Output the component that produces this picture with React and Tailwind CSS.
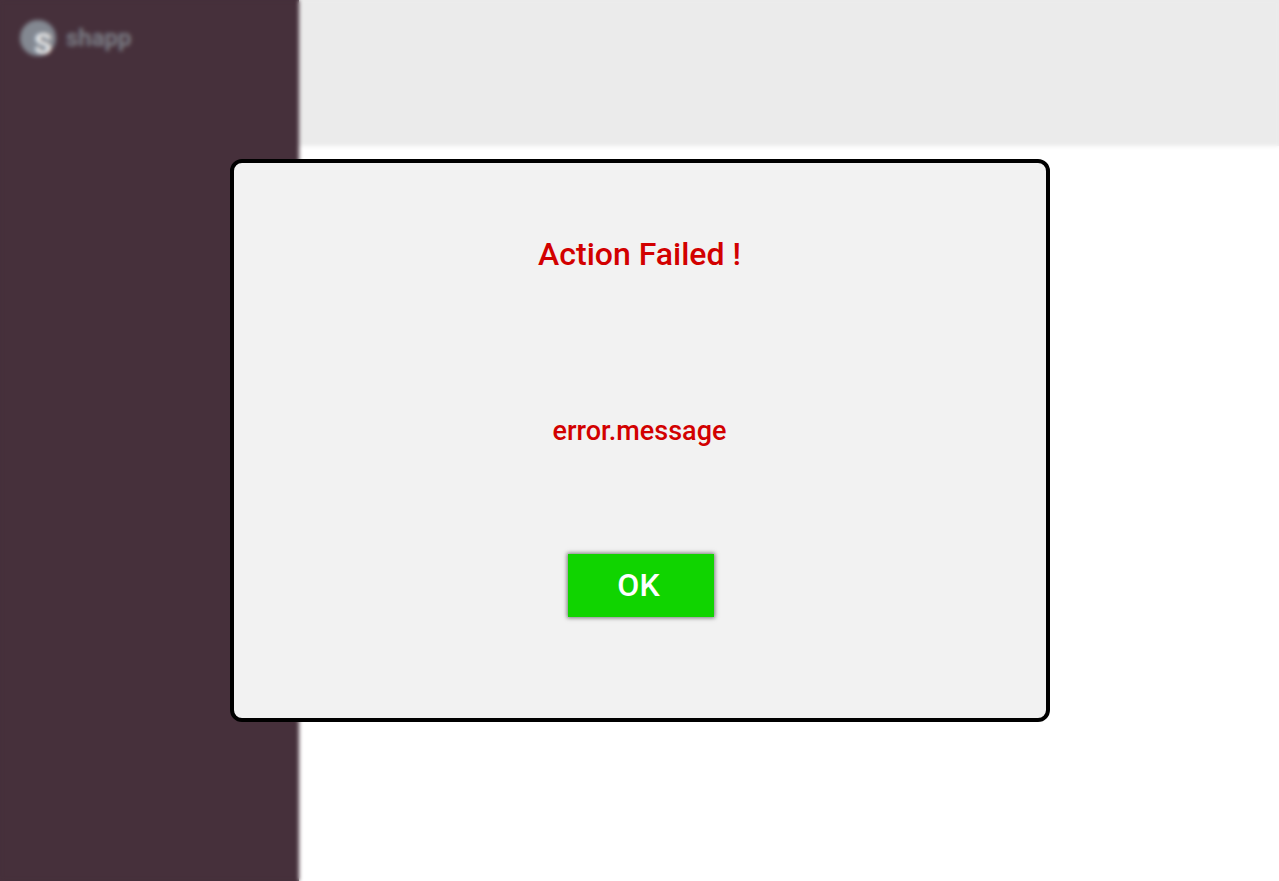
export default function App() {
  return (
    <div className="relative flex min-h-screen bg-white font-['Roboto',sans-serif]">
      <aside className="w-[299px] shrink-0 bg-[#46303b] px-5 py-5">
        <a href="#" className="flex items-center gap-2.5">
          <svg viewBox="0 0 36 36" className="size-9 overflow-visible" role="img" aria-label="S logo">
            <circle cx="18" cy="18" r="18" fill="#838891" />
            <text x="23" y="34" textAnchor="middle" fontSize="29" fontWeight="700" fill="#eeeeee">S</text>
          </svg>
          <span className="text-2xl leading-8 font-bold text-[#7c7e86]">shapp</span>
        </a>
      </aside>
      <main className="grow">
        <header className="h-[146px] bg-[#ebebeb]" />
      </main>

      <div className="fixed inset-0 flex items-center justify-center backdrop-blur-[2px]">
        <div
          role="alertdialog"
          aria-labelledby="dialog-title"
          aria-describedby="dialog-message"
          className="flex w-[820px] max-w-full flex-col items-center rounded-xl border-4 border-black bg-[#f2f2f2] pt-[72px] pb-[101px] text-[#d20000]"
        >
          <h1 id="dialog-title" className="text-[32px] leading-[38px] font-medium">Action Failed !</h1>
          <p id="dialog-message" className="mt-[142px] text-[27px] leading-8 font-medium">error.message</p>
          <button
            type="button"
            className="mt-[107px] ml-[2px] h-[63px] w-[146px] bg-[#10d400] pr-1 pb-0.5 text-[32px] leading-[38px] font-medium text-white shadow-[0_0_4px_1px_rgba(0,0,0,0.5)]"
          >
            OK
          </button>
        </div>
      </div>
    </div>
  );
}
